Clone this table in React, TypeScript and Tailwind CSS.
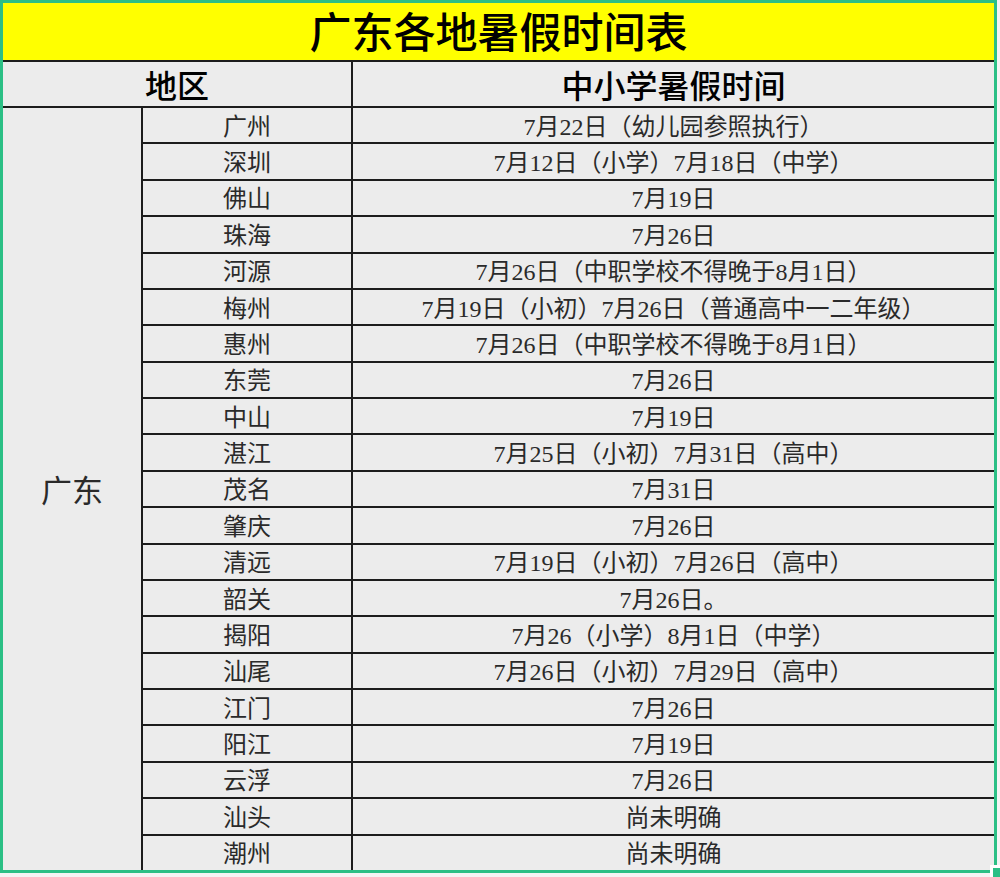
const rows: [string, string][] = [
  ["广州", "7月22日（幼儿园参照执行）"],
  ["深圳", "7月12日（小学）7月18日（中学）"],
  ["佛山", "7月19日"],
  ["珠海", "7月26日"],
  ["河源", "7月26日（中职学校不得晚于8月1日）"],
  ["梅州", "7月19日（小初）7月26日（普通高中一二年级）"],
  ["惠州", "7月26日（中职学校不得晚于8月1日）"],
  ["东莞", "7月26日"],
  ["中山", "7月19日"],
  ["湛江", "7月25日（小初）7月31日（高中）"],
  ["茂名", "7月31日"],
  ["肇庆", "7月26日"],
  ["清远", "7月19日（小初）7月26日（高中）"],
  ["韶关", "7月26日。"],
  ["揭阳", "7月26（小学）8月1日（中学）"],
  ["汕尾", "7月26日（小初）7月29日（高中）"],
  ["江门", "7月26日"],
  ["阳江", "7月19日"],
  ["云浮", "7月26日"],
  ["汕头", "尚未明确"],
  ["潮州", "尚未明确"],
];

const App = () => {
  return (
    <div className="relative h-[877px] w-[1000px] bg-[#f4f4f4] font-['Liberation_Serif','Noto_Sans_CJK_SC',serif] text-[#2a2a2a]">
      <div className="flex h-[873px] w-[997px] flex-col border-[3px] border-[#2bbf85] bg-[#ececec]">
        {/* title */}
        <div className="flex h-[59px] shrink-0 items-center justify-center border-b-2 border-[#1c1c1c] bg-[#ffff00] pt-[4px] text-[42px] font-medium leading-none text-black">
          广东各地暑假时间表
        </div>

        {/* header */}
        <div className="flex h-[46px] shrink-0 border-b-2 border-[#1c1c1c] text-[32px] font-medium leading-none text-black">
          <div className="flex w-[350px] items-center justify-center border-r-2 border-[#1c1c1c] pt-[5px]">地区</div>
          <div className="flex flex-1 items-center justify-center pt-[5px]">中小学暑假时间</div>
        </div>

        {/* body */}
        <div className="flex flex-1">
          <div className="flex w-[140px] shrink-0 items-center justify-center border-r-2 border-[#1c1c1c] pt-[4px] text-[31px] leading-none">
            广东
          </div>
          <div className="flex flex-1 flex-col">
            {rows.map(([city, date], i) => (
              <div
                key={city}
                className={`flex flex-1 text-[24px] leading-none ${i < rows.length - 1 ? "border-b-2 border-[#1c1c1c]" : ""}`}
              >
                <div className="flex w-[210px] shrink-0 items-center justify-center border-r-2 border-[#1c1c1c] pt-[3px]">{city}</div>
                <div className="flex flex-1 items-center justify-center pt-[3px]">{date}</div>
              </div>
            ))}
          </div>
        </div>
      </div>

      {/* selection handle */}
      <div className="absolute left-[990px] top-[865px] h-[12px] w-[10px] border-l-[3px] border-t-[3px] border-white bg-[#2bbf85]" />
    </div>
  );
};

export default App;
